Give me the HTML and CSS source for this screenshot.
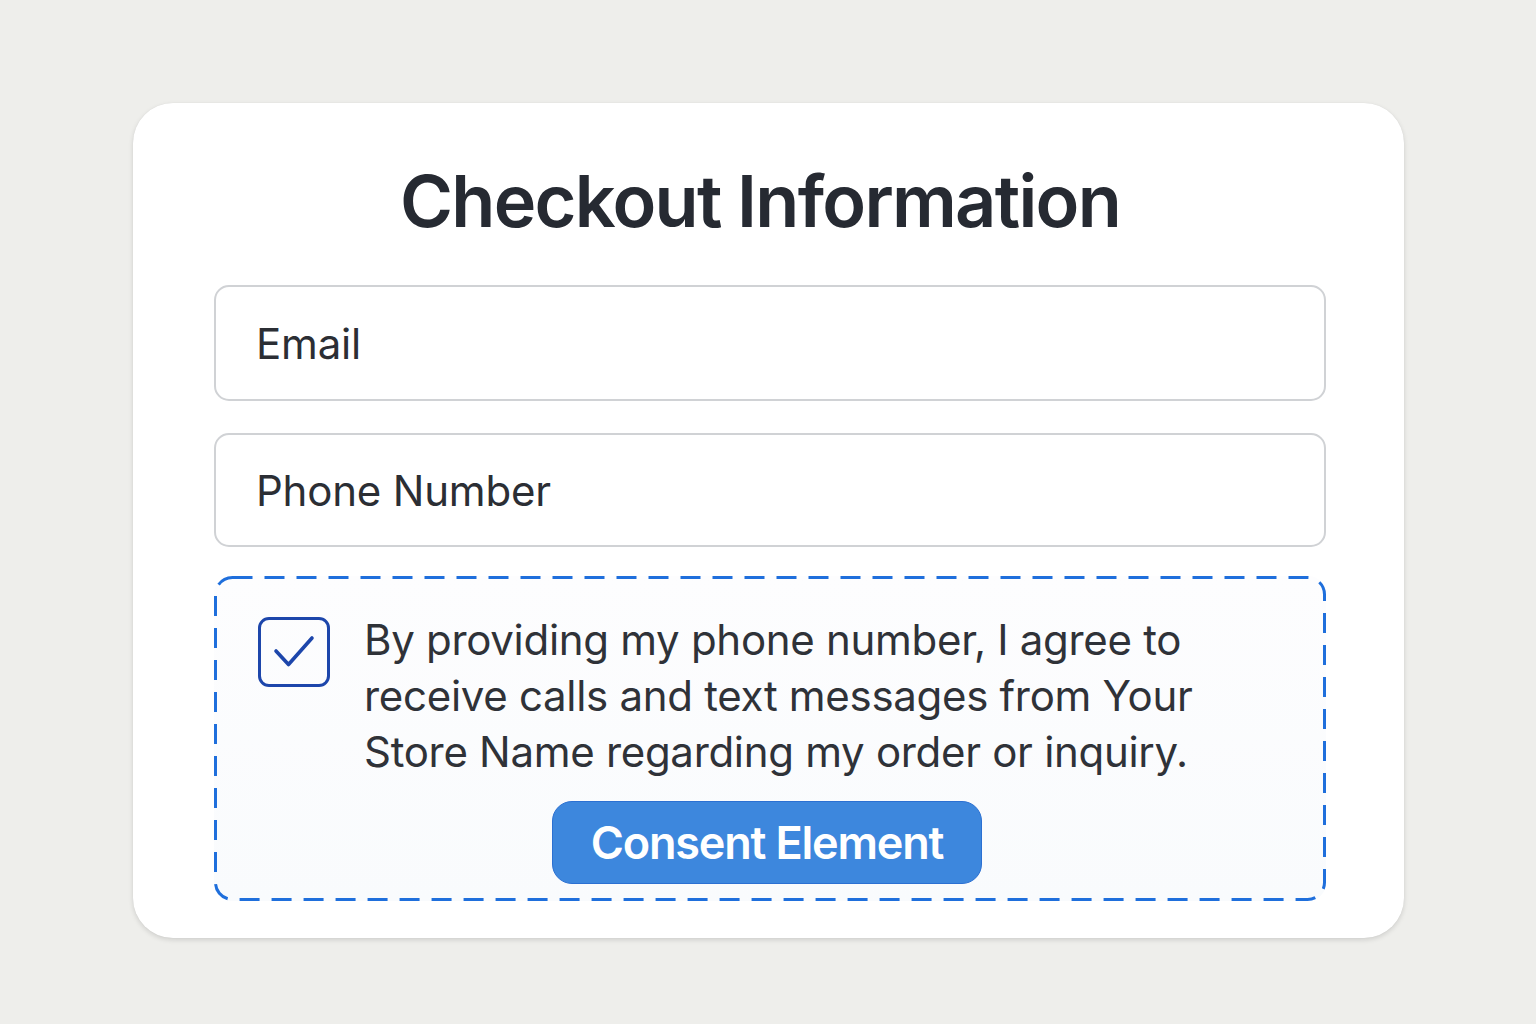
FILE: index.html
```html
<!DOCTYPE html>
<html lang="en">
<head>
<meta charset="utf-8">
<title>Checkout Information</title>
<link rel="stylesheet" href="styles.css">
</head>
<body>
<main class="card">
  <h1 class="title">Checkout Information</h1>
  <div class="field"><span class="placeholder">Email</span></div>
  <div class="field field-second"><span class="placeholder">Phone Number</span></div>
  <section class="consent">
    <svg class="dash" aria-hidden="true"><rect class="dash-rect" x="1.5" y="1.5" rx="17" ry="17"></rect></svg>
    <div class="consent-row">
      <div class="checkbox">
        <svg width="70" height="70" viewBox="0 0 70 70" aria-hidden="true"><path d="M17 34 L29.5 47.5 L53 21" fill="none" stroke="#1d46ab" stroke-width="3.6" stroke-linecap="round" stroke-linejoin="round"/></svg>
      </div>
      <p class="consent-text">By providing my phone number, I agree to<br>receive calls and text messages from Your<br>Store Name regarding my order or inquiry.</p>
    </div>
    <div class="button-row">
      <button class="consent-btn" type="button">Consent Element</button>
    </div>
  </section>
</main>
</body>
</html>
```

FILE: styles.css
```css
html, body {
  margin: 0;
  padding: 0;
}
body {
  background: #eeeeeb;
  font-family: Inter, "Noto Sans", "Liberation Sans", sans-serif;
  color: #2f3238;
  width: 1536px;
  height: 1024px;
  overflow: hidden;
  padding-top: 103px;
  box-sizing: border-box;
}
.card {
  margin-left: 133px;
  width: 1271px;
  height: 835px;
  box-sizing: border-box;
  background: #ffffff;
  border-radius: 40px;
  box-shadow: 0 2px 5px rgba(0, 0, 0, 0.13), 0 0 1px rgba(0, 0, 0, 0.08);
  padding: 54px 78px 0 81px;
}
.title {
  margin: 0;
  text-align: center;
  font-size: 72px;
  line-height: 88px;
  font-weight: 600;
  color: #262a32;
  letter-spacing: -1.7px;
  padding-right: 20px;
}
.field {
  margin-top: 40px;
  height: 116px;
  box-sizing: border-box;
  border: 2px solid #d0d2d5;
  border-radius: 15px;
  display: flex;
  align-items: center;
  padding-left: 40px;
}
.field-second {
  margin-top: 32px;
  height: 114px;
}
.placeholder {
  font-size: 42px;
  color: #2b2e34;
  letter-spacing: -0.2px;
}
.consent {
  position: relative;
  margin-top: 29px;
  height: 325px;
  box-sizing: border-box;
  border-radius: 18px;
  background: linear-gradient(180deg, #fdfdfe 0%, #f9fbfd 100%);
  padding: 36px 40px 0 44px;
}
.dash {
  position: absolute;
  inset: 0;
  width: 100%;
  height: 100%;
  overflow: visible;
  pointer-events: none;
}
.dash-rect {
  width: calc(100% - 3px);
  height: calc(100% - 3px);
  fill: none;
  stroke: #1f6fdc;
  stroke-width: 3;
  stroke-dasharray: 20 12;
}
.consent-row {
  display: flex;
  align-items: flex-start;
  gap: 34px;
}
.checkbox {
  flex: none;
  margin-top: 5px;
  width: 72px;
  height: 70px;
  box-sizing: border-box;
  border: 3.5px solid #1d46ab;
  border-radius: 11px;
  display: flex;
  align-items: center;
  justify-content: center;
}
.checkbox svg {
  display: block;
  width: 70px;
  height: 70px;
  flex: none;
}
.consent-text {
  margin: 0;
  font-size: 42px;
  line-height: 56px;
  color: #2f3238;
  letter-spacing: -0.3px;
}
.button-row {
  display: flex;
  justify-content: center;
  margin-top: 21px;
  padding-right: 10px;
}
.consent-btn {
  width: 430px;
  height: 83px;
  border: 1.5px solid #2b70d2;
  border-radius: 20px;
  background: #3d87dd;
  color: #ffffff;
  font-family: Inter, "Noto Sans", "Liberation Sans", sans-serif;
  font-size: 45px;
  font-weight: 600;
  letter-spacing: -1.2px;
  padding: 0;
  cursor: pointer;
}
```
